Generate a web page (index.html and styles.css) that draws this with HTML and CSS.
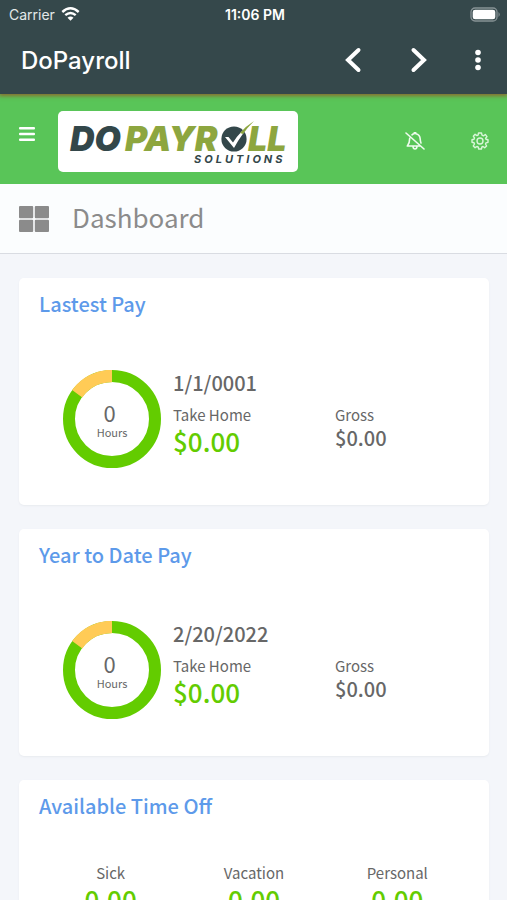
FILE: index.html
```html
<!DOCTYPE html>
<html lang="en">
<head>
<meta charset="utf-8">
<meta name="viewport" content="width=device-width, initial-scale=1">
<title>DoPayroll</title>
<link rel="stylesheet" href="styles.css">
</head>
<body>
<header class="app">
  <div class="status">
    <span class="carrier">Carrier
      <svg width="19" height="14" viewBox="0 0 19 14" fill="none" stroke="#fff" stroke-width="2.4"><path d="M1.3 5Q9.500-2.300 17.700 5M4.300 8.200Q9.500 3.700 14.700 8.200"/><path d="M9.500 13.700L6.500 10.700Q9.500 8.300 12.500 10.700Z" fill="#fff" stroke="none"/></svg>
    </span>
    <span class="time">11:06 PM</span>
    <svg class="battery" width="31" height="15" viewBox="0 0 31 15"><rect x="1" y="1" width="26" height="13" rx="4" fill="none" stroke="#879295" stroke-width="1.300"/><rect x="2.700" y="2.700" width="22.600" height="9.600" rx="2.400" fill="#fff"/><path d="M28.500 5Q31 7.500 28.500 10Z" fill="#879295"/></svg>
  </div>
  <div class="toolbar">
    <span class="app-name">DoPayroll</span>
    <button class="tool" aria-label="Back"><svg width="18" height="26" viewBox="0 0 18 26"><path d="M14.500 3L4 13L14.500 23"/></svg></button>
    <button class="tool forward" aria-label="Forward"><svg width="18" height="26" viewBox="0 0 18 26"><path d="M3.500 3L14 13L3.500 23"/></svg></button>
    <button class="tool more" aria-label="More"><svg width="8" height="22" viewBox="0 0 8 22"><g class="dots"><circle cx="4" cy="3.500" r="2.800"/><circle cx="4" cy="11" r="2.800"/><circle cx="4" cy="18.500" r="2.800"/></g></svg></button>
  </div>
</header>
<nav class="brandbar">
  <button class="menu" aria-label="Menu"><svg width="16" height="15" viewBox="0 0 16 15" fill="#fff"><rect y="0" width="16" height="2.600" rx="1"/><rect y="5.700" width="16" height="2.600" rx="1"/><rect y="11.400" width="16" height="2.600" rx="1"/></svg></button>
  <a class="logo" href="#" aria-label="DoPayroll Solutions">
    <svg width="240" height="61" viewBox="0 0 240 61">
      <g class="wordmark">
        <text x="12" y="40" fill="#33474a">DO</text>
        <text x="67" y="40" fill="#8da63f">PAYR</text>
        <text x="190" y="40" fill="#8da63f">LL</text>
      </g>
      <circle cx="176" cy="28" r="12.600" fill="#33474a"/>
      <path d="M167 26L170.500 26L175 31.500Q182 20 196 10Q184 22 176 37Z" fill="#fff"/>
      <path d="M182 22Q188 15 196 10Q189 17 185 23Z" fill="#8da63f"/>
      <text class="sub" x="136" y="52">SOLUTIONS</text>
    </svg>
  </a>
  <button class="bell" aria-label="Notifications off"><svg width="20" height="20" viewBox="0 0 20 20" fill="none" stroke="#effbef" stroke-width="1.600" stroke-linecap="round" stroke-linejoin="round"><path d="M1 2L19 18M4.700 7.200C4.700 12 3.500 13.300 2.300 15H14.800M7 3.800Q8 2.900 9.200 2.800V1.700H10.800V2.800Q15 3.500 15.200 8Q15.300 10.200 16 12M8 15.500Q8.200 18 10 18Q11.800 18 12 15.500"/></svg></button>
  <button aria-label="Settings"><svg width="18" height="18" viewBox="0 0 18 18" fill="none" stroke="#d9f6d9" stroke-width="1.400" stroke-linejoin="round"><path d="M7.500 1H10.500L11 3.200L12.400 3.800L14.300 2.500L16 4.600L14.600 6.300L15 7.300L17 7.800V10.300L15 10.900L14.500 12L15.600 14L13.700 15.800L12 14.500L10.900 15L10.400 17H7.700L7.200 15L5.900 14.500L4.100 15.700L2.300 13.900L3.500 12L3 10.800L1 10.300V7.700L3 7.200L3.500 6L2.300 4.200L4.100 2.300L6 3.600L7.100 3.100Z"/><circle cx="9" cy="9" r="3"/></svg></button>
</nav>
<div class="page-head">
  <svg width="30" height="26" viewBox="0 0 30 26" fill="#8b8b8b"><rect width="14.200" height="12.200" rx="1"/><rect x="15.800" width="14.200" height="12.200" rx="1"/><rect y="13.800" width="14.200" height="12.200" rx="1"/><rect x="15.800" y="13.800" width="14.200" height="12.200" rx="1"/></svg>
  <h1>Dashboard</h1>
</div>
<main>
  <section class="card">
    <h2>Lastest Pay</h2>
    <div class="pay">
      <div class="ring"><svg viewBox="0 0 98 98" fill="none" stroke-width="12"><circle cx="49" cy="49" r="43" stroke="#63cc00"/><path d="M14.200 23.700A43 43 0 0 1 49 6" stroke="#ffcb56" stroke-width="12.600"/></svg><div class="hours"><span class="count">0</span><span class="unit">Hours</span></div></div>
      <div class="date">1/1/0001</div>
      <div class="net"><span class="label">Take Home</span><span class="big">$0.00</span></div>
      <div class="gross"><span class="label">Gross</span><span class="amount">$0.00</span></div>
    </div>
  </section>
  <section class="card">
    <h2>Year to Date Pay</h2>
    <div class="pay">
      <div class="ring"><svg viewBox="0 0 98 98" fill="none" stroke-width="12"><circle cx="49" cy="49" r="43" stroke="#63cc00"/><path d="M14.200 23.700A43 43 0 0 1 49 6" stroke="#ffcb56" stroke-width="12.600"/></svg><div class="hours"><span class="count">0</span><span class="unit">Hours</span></div></div>
      <div class="date">2/20/2022</div>
      <div class="net"><span class="label">Take Home</span><span class="big">$0.00</span></div>
      <div class="gross"><span class="label">Gross</span><span class="amount">$0.00</span></div>
    </div>
  </section>
  <section class="card">
    <h2>Available Time Off</h2>
    <div class="balances">
      <div><span class="label">Sick</span><span class="big">0.00</span></div>
      <div><span class="label">Vacation</span><span class="big">0.00</span></div>
      <div><span class="label">Personal</span><span class="big">0.00</span></div>
    </div>
  </section>
</main>
</body>
</html>
```
FILE: styles.css
```css
* { box-sizing: border-box; }
html { height: 100%; overflow: hidden; }
body {
  margin: 0;
  height: 100%;
  overflow: hidden;
  background: #f4f6fa;
  color: #676767;
  font-family: "Noto Sans CJK SC", sans-serif;
}
button { padding: 0; border: 0; background: none; color: inherit; }
svg { display: block; flex: none; }
h1, h2 { margin: 0; }

.app {
  position: relative;
  background: #35484b;
  color: #fff;
  font-family: Inter, sans-serif;
  box-shadow: 0 1px 4px 1px #8a6a30;
}
.status {
  display: grid;
  grid-template-columns: 1fr auto 1fr;
  align-items: center;
  height: 28px;
  padding: 0 6px 0 9px;
  font-size: 14px;
}
.carrier { display: flex; align-items: center; gap: 6px; color: #e3e8e9; }
.time { font-weight: 600; }
.battery { justify-self: end; }
.toolbar {
  display: flex;
  align-items: center;
  height: 66px;
  padding: 0 25px 2px 21px;
}
.app-name { flex: 1; font-size: 24px; font-weight: 500; }
.tool svg { fill: none; stroke: #fff; stroke-width: 4; stroke-linecap: round; }
.tool .dots { fill: #fff; stroke: none; }
.forward { margin-left: 48px; }
.more { margin-left: 46px; }

.brandbar {
  display: flex;
  align-items: center;
  height: 90px;
  padding: 4px 18px 0 19px;
  background: #59c558;
}
.menu { margin: 0 23px 14px 0; }
.logo { margin-right: auto; border-radius: 5px; background: #fff; }
.wordmark { font: italic 900 34px Inter, sans-serif; }
.sub { font: italic 700 11px Inter, sans-serif; fill: #33474a; letter-spacing: 3px; }
.bell { margin-right: 46px; }

.page-head {
  display: flex;
  align-items: center;
  gap: 23px;
  height: 70px;
  padding: 0 19px;
  background: #fbfdfe;
  border-bottom: 1px solid #d9dce2;
}
h1 { padding-bottom: 4px; font-size: 26px; line-height: 36px; font-weight: 400; color: #8b8b8b; }

main { display: grid; gap: 24px; padding: 24px 18px 24px 19px; }
.card {
  min-height: 227px;
  padding: 13px 20px;
  border-radius: 5px;
  background: #fff;
  box-shadow: 0 1px 2px #e8ebef;
}
h2 { font-size: 20px; line-height: 26px; font-weight: 500; color: #5d9aea; }
.pay {
  display: grid;
  grid-template-columns: 98px 150px 1fr;
  grid-template-rows: 26px auto;
  column-gap: 12px;
  margin: 53px 0 0 24px;
}
.ring { display: grid; grid-row: 1 / 3; align-self: start; }
.ring > * { grid-area: 1 / 1; }
.hours { display: grid; justify-items: center; align-content: center; }
.count { font-size: 22px; line-height: 26px; margin-right: 5px; }
.unit { font-size: 11px; line-height: 14px; }
.date { grid-column: 2 / 4; font-size: 20px; line-height: 26px; font-weight: 500; }
.label, .big, .amount { display: block; }
.label { font-size: 15px; line-height: 20px; }
.net, .gross { padding-top: 9px; }
.big { font-size: 26px; line-height: 32px; font-weight: 500; color: #63cc00; }
.amount { font-size: 20px; line-height: 26px; font-weight: 500; }
.balances {
  display: grid;
  grid-template-columns: repeat(3, 1fr);
  margin-top: 44px;
  text-align: center;
}
```
